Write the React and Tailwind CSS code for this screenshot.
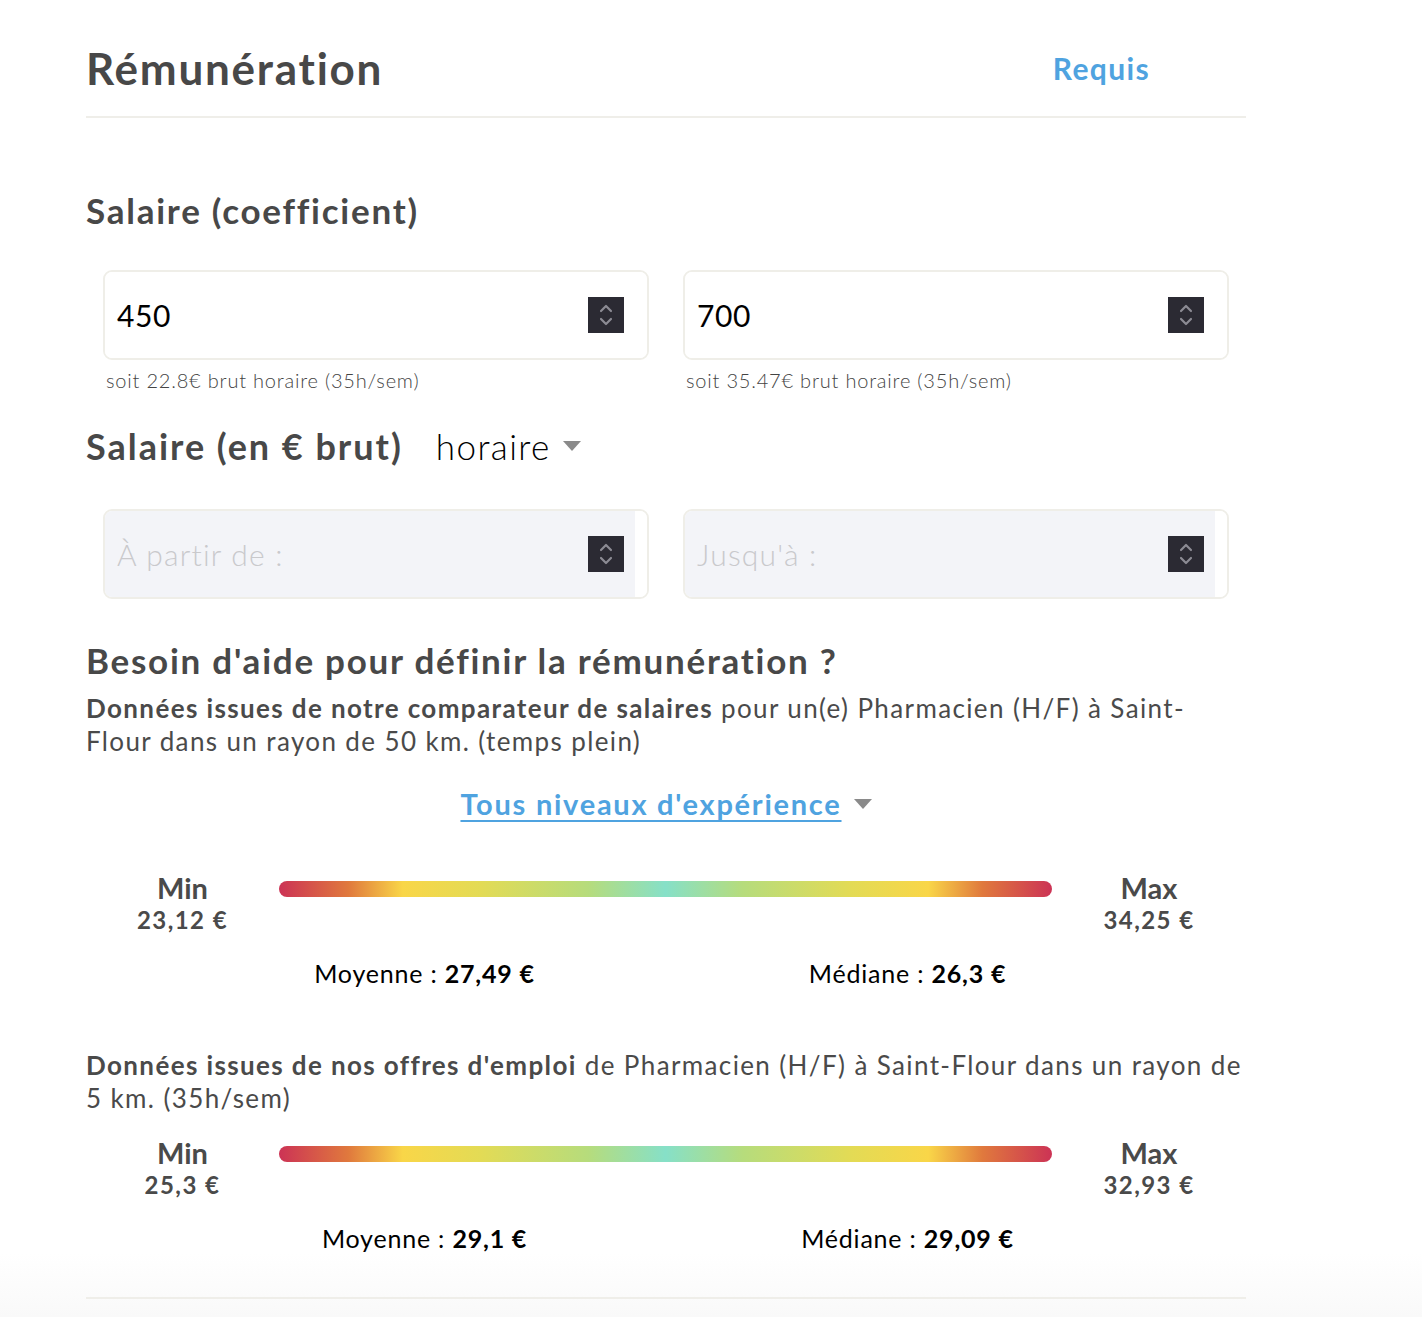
import React from "react";

const font = { fontFamily: "Lato, 'Open Sans', sans-serif" };

const barGradient =
	"linear-gradient(90deg, #cc3355 0%, #e0793d 9%, #f9d648 16%, #e3db55 26%, #b6dc7c 40%, #86e0c8 50%, #b6dc7c 60%, #e3db55 74%, #f9d648 84%, #e0793d 91%, #cc3355 100%)";

const Spinner = () => (
	<div className="w-[36px] h-[36px] bg-[#2b2a33] flex items-center justify-center shrink-0">
		<svg width="16" height="26" viewBox="0 0 16 26" fill="none">
			<path d="M3 9 L8 4 L13 9" stroke="#8c8b94" strokeWidth="2.2" strokeLinecap="round" strokeLinejoin="round" />
			<path d="M3 17 L8 22 L13 17" stroke="#8c8b94" strokeWidth="2.2" strokeLinecap="round" strokeLinejoin="round" />
		</svg>
	</div>
);

const NumberField = ({ value, placeholder, disabled }) => (
	<div className="h-[90px] border-2 border-[#efeee8] rounded-[9px] overflow-hidden flex bg-white">
		<div className={`flex-1 flex items-center pl-[12px] pr-[11px] ${disabled ? "bg-[#f3f4f8]" : "bg-white"}`}>
			<span className={`flex-1 text-[30px] ${value ? "text-black tracking-[0.02em]" : "text-[#c9c9cc] font-light tracking-[0.04em]"}`}>
				{value || placeholder}
			</span>
			<Spinner />
		</div>
		<div className="w-[12px] bg-white" />
	</div>
);

const Caret = ({ className }) => (
	<svg className={className} width="18" height="10" viewBox="0 0 18 10">
		<path d="M0 0 L18 0 L9 10 Z" fill="#8a8a8a" />
	</svg>
);

const Stats = ({ min, max, avg, median }) => (
	<>
		<div className="flex">
			<div className="w-[193px] text-center text-[#4a4a4a] font-bold">
				<div className="text-[29px] leading-[34px] tracking-normal">Min</div>
				<div className="text-[24px] leading-[30px] tracking-[0.06em]">{min}</div>
			</div>
			<div className="flex-1 pt-[10px]">
				<div className="h-[16px] rounded-full" style={{ background: barGradient }} />
			</div>
			<div className="w-[194px] text-center text-[#4a4a4a] font-bold">
				<div className="text-[29px] leading-[34px] tracking-normal">Max</div>
				<div className="text-[24px] leading-[30px] tracking-[0.06em]">{max}</div>
			</div>
		</div>
		<div className="mt-[23px] flex justify-center gap-[243px] text-[25px] leading-[30px] text-black">
			<div className="w-[240px] text-center whitespace-nowrap">
				Moyenne : <span className="font-bold">{avg}</span>
			</div>
			<div className="w-[240px] text-center whitespace-nowrap">
				Médiane : <span className="font-bold">{median}</span>
			</div>
		</div>
	</>
);

const App = () => {
	return (
		<div className="min-h-screen bg-white tracking-[0.05em]" style={font}>
			<div className="ml-[86px] w-[1160px]">
				{/* Header */}
				<div className="pt-[42px] pb-[22px] border-b-2 border-[#efeee9] flex items-center justify-between pr-[96px]">
					<h1 className="text-[44px] leading-[52px] font-bold text-[#484848] tracking-[0.04em]">Rémunération</h1>
					<span className="text-[30px] font-bold text-[#4fa3e0] tracking-[0.045em]">Requis</span>
				</div>

				{/* Coefficient */}
				<h2 className="mt-[72px] text-[35px] leading-[40px] font-bold text-[#484848] tracking-[0.05em]">Salaire (coefficient)</h2>
				<div className="mt-[40px] px-[17px] grid grid-cols-2 gap-[34px]">
					<div>
						<NumberField value="450" />
						<p className="mt-[8px] pl-[3px] text-[20px] leading-[24px] font-light text-[#444]">soit 22.8€ brut horaire (35h/sem)</p>
					</div>
					<div>
						<NumberField value="700" />
						<p className="mt-[8px] pl-[3px] text-[20px] leading-[24px] font-light text-[#444]">soit 35.47€ brut horaire (35h/sem)</p>
					</div>
				</div>

				{/* Brut */}
				<div className="mt-[34px] flex items-center">
					<h2 className="text-[36px] leading-[40px] font-bold text-[#484848] tracking-[0.055em]">Salaire (en € brut)</h2>
					<span className="ml-[33px] text-[35px] leading-[40px] font-light text-black tracking-[0.04em]">horaire</span>
					<Caret className="ml-[12px]" />
				</div>
				<div className="mt-[43px] px-[17px] grid grid-cols-2 gap-[34px]">
					<NumberField placeholder="À partir de :" disabled />
					<NumberField placeholder="Jusqu'à :" disabled />
				</div>

				{/* Aide */}
				<h2 className="mt-[41px] text-[35px] leading-[40px] font-bold text-[#484848] tracking-[0.05em]">Besoin d'aide pour définir la rémunération ?</h2>
				<p className="mt-[12px] text-[26px] leading-[33px] text-[#4a4a4a] whitespace-nowrap tracking-[0.053em]">
					<span className="font-bold">Données issues de notre comparateur de salaires</span> pour un(e) Pharmacien (H/F) à Saint-
					<br />
					Flour dans un rayon de 50 km. (temps plein)
				</p>
				<div className="mt-[28px] flex items-center justify-center">
					<span className="text-[29px] leading-[36px] font-bold text-[#4fa3e0] tracking-[0.06em] underline underline-offset-[5px] decoration-2">
						Tous niveaux d'expérience
					</span>
					<Caret className="ml-[12px]" />
				</div>

				<div className="mt-[49px]">
					<Stats min="23,12 €" max="34,25 €" avg="27,49 €" median="26,3 €" />
				</div>

				<p className="mt-[61px] text-[26px] leading-[33px] text-[#4a4a4a] whitespace-nowrap tracking-[0.053em]">
					<span className="font-bold">Données issues de nos offres d'emploi</span> de Pharmacien (H/F) à Saint-Flour dans un rayon de
					<br />
					5 km. (35h/sem)
				</p>

				<div className="mt-[21px]">
					<Stats min="25,3 €" max="32,93 €" avg="29,1 €" median="29,09 €" />
				</div>
			</div>

			{/* Bottom fade */}
			<div className="h-[64px] bg-gradient-to-b from-white to-[#f9f9f9] pt-[44px]">
				<div className="ml-[86px] w-[1160px] border-t-2 border-[#efeee9]" />
			</div>
		</div>
	);
};

export default App;
